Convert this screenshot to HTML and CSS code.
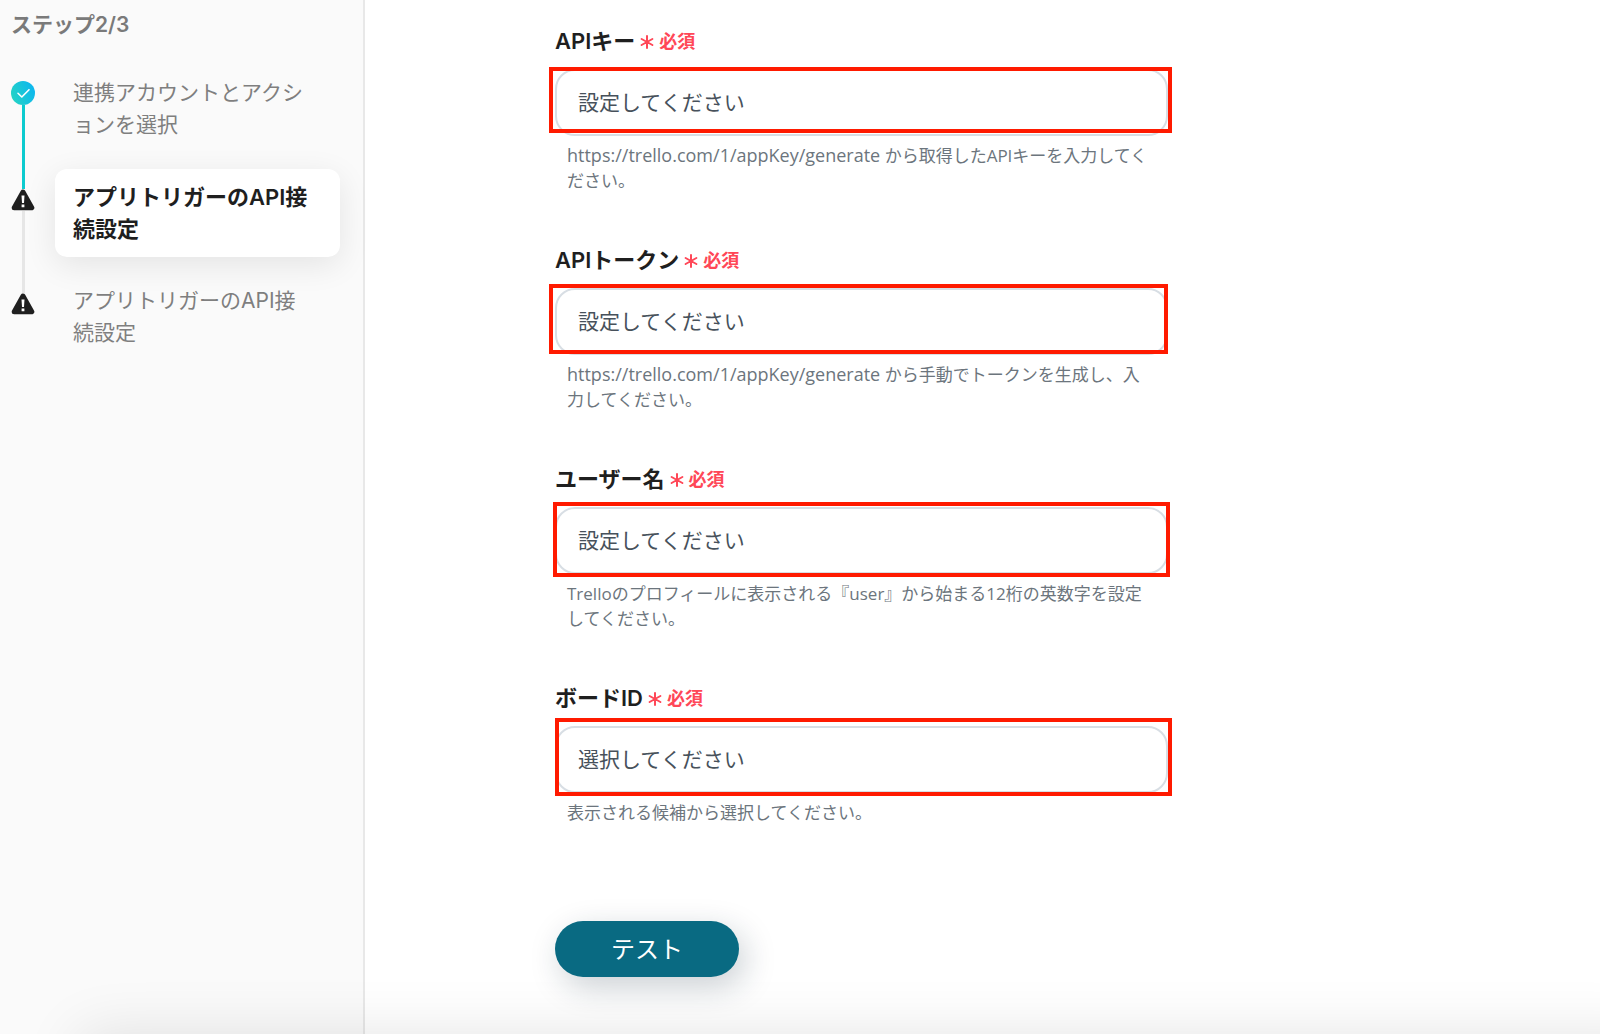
FILE: index.html
```html
<!DOCTYPE html>
<html lang="ja">
<head>
  <meta charset="UTF-8" />
  <meta name="viewport" content="width=device-width, initial-scale=1.0"/>
  <title>アプリトリガーのAPI接続設定</title>
  <link rel="stylesheet" href="styles.css">
</head>
<body>
  <svg class="defs" aria-hidden="true">
    <symbol id="required" viewBox="0 0 14 14">
      <path d="M7 1v12M1.6 4l10.8 6M12.4 4L1.6 10" fill="none" stroke="currentColor" stroke-width="2" stroke-linecap="round"/>
    </symbol>
    <symbol id="warning" viewBox="0 0 24 22">
      <path d="M12 3L20.800 18.800H3.200z" fill="#1f1f1f" stroke="#1f1f1f" stroke-width="5" stroke-linejoin="round"/>
      <path d="M10.500 6.500h3l-.5 7.500h-2zM10.600 15.500h2.800v2.800h-2.800z" fill="#fff"/>
    </symbol>
  </svg>

  <div class="layout">
    <aside class="sidebar">
      <h2 class="sidebar-title">ステップ2/3</h2>
      <ol class="steps">
        <li class="step">
          <div class="marker done">
            <svg width="24" height="24" viewBox="0 0 24 24">
              <defs>
                <linearGradient id="doneFill" x1="0" y1="0.7" x2="1" y2="0.3">
                  <stop offset="0" stop-color="#25d3c4"/>
                  <stop offset="1" stop-color="#0cb6f0"/>
                </linearGradient>
              </defs>
              <circle cx="12" cy="12" r="12" fill="url(#doneFill)"/>
              <path d="M7 12.300l3.800 3.700L18 8.700" fill="none" stroke="#fff" stroke-width="1.600" stroke-linecap="round" stroke-linejoin="round"/>
            </svg>
            <span class="line"></span>
          </div>
          <p class="step-name">連携アカウントとアクシ<br>ョンを選択</p>
        </li>
        <li class="step current">
          <div class="marker">
            <svg width="24" height="22"><use href="#warning"/></svg>
            <span class="line"></span>
          </div>
          <p class="step-name">アプリトリガーのAPI接<br>続設定</p>
        </li>
        <li class="step">
          <div class="marker">
            <svg width="24" height="22"><use href="#warning"/></svg>
          </div>
          <p class="step-name">アプリトリガーのAPI接<br>続設定</p>
        </li>
      </ol>
    </aside>

    <main class="content">
      <form class="form">
        <div class="field">
          <label for="apiKey">APIキー<span class="required"><svg width="14" height="14"><use href="#required"/></svg>必須</span></label>
          <div class="control mark-key">
            <input type="text" id="apiKey" placeholder="設定してください" />
          </div>
          <p class="help"><span class="url">https://trello.com/1/appKey/generate</span> から取得したAPIキーを入力してく<br>ださい。</p>
        </div>

        <div class="field">
          <label for="apiToken">APIトークン<span class="required"><svg width="14" height="14"><use href="#required"/></svg>必須</span></label>
          <div class="control mark-token">
            <input type="text" id="apiToken" placeholder="設定してください" />
          </div>
          <p class="help"><span class="url">https://trello.com/1/appKey/generate</span> から手動でトークンを生成し、入<br>力してください。</p>
        </div>

        <div class="field">
          <label for="userName">ユーザー名<span class="required"><svg width="14" height="14"><use href="#required"/></svg>必須</span></label>
          <div class="control mark-user">
            <input type="text" id="userName" placeholder="設定してください" />
          </div>
          <p class="help">Trelloのプロフィールに表示される『user』から始まる12桁の英数字を設定<br>してください。</p>
        </div>

        <div class="field">
          <label for="boardId">ボードID<span class="required"><svg width="14" height="14"><use href="#required"/></svg>必須</span></label>
          <div class="control mark-board">
            <select id="boardId">
              <option>選択してください</option>
            </select>
          </div>
          <p class="help">表示される候補から選択してください。</p>
        </div>

        <button type="button" class="test-button">テスト</button>
      </form>
    </main>
  </div>

  <div class="bottom-shade"></div>
</body>
</html>
```

FILE: styles.css
```css
* {
  box-sizing: border-box;
}
body {
  margin: 0;
  background: #fff;
  color: #1f1f1f;
  font-family: Inter, "Noto Sans CJK JP", sans-serif;
  font-size: 21px;
}
h2, p, ol {
  margin: 0;
  padding: 0;
}
.defs {
  display: none;
}
.layout {
  display: flex;
  min-height: 100vh;
}

/* sidebar */
.sidebar {
  flex: 0 0 365px;
  padding: 9px 23px 0 11px;
  background: #fafafa;
  border-right: 2px solid #e8e8e8;
}
.sidebar-title {
  margin-bottom: 24px;
  color: #7a7a7a;
  font-size: 21px;
  font-weight: 600;
  line-height: 32px;
}
.steps {
  display: flex;
  flex-direction: column;
  gap: 16px;
  list-style: none;
}
.step {
  display: flex;
  gap: 20px;
}
/* runs down into the next row so the line reaches the next icon */
.marker {
  display: flex;
  flex-direction: column;
  align-items: center;
  flex: 0 0 24px;
  margin: 20px 0 -36px;
}
.marker svg {
  flex: none;
}
.marker.done {
  margin-top: 16px;
}
.line {
  flex: 1;
  width: 3px;
  background: #e6e6e6;
}
.done .line {
  background: #0ccbcf;
}
.step-name {
  flex: 1;
  padding: 12px 0 12px 18px;
  border-radius: 12px;
  color: #7f7f7f;
  line-height: 32px;
  white-space: nowrap;
}
.current .step-name {
  background: #fff;
  box-shadow: 0 8px 32px rgba(0,0,0,0.09);
  color: #1f1f1f;
  font-size: 22px;
  font-weight: 600;
}

/* form */
.content {
  flex: 1;
  padding: 25px 24px 40px 190px;
}
.form {
  max-width: 613px;
}
.field {
  margin-bottom: 51px;
}
.field label {
  display: flex;
  align-items: center;
  gap: 5px;
  height: 32px;
  margin-bottom: 12px;
  font-size: 22px;
  font-weight: 600;
  line-height: 32px;
}
.required {
  display: flex;
  align-items: center;
  gap: 5px;
  padding-top: 2px;
  color: #ff4757;
  font-size: 18px;
}
.control {
  position: relative;
}
.control input,
.control select {
  display: block;
  width: 100%;
  height: 67px;
  padding: 0 21px;
  border: 2px solid #d8dee4;
  border-radius: 20px;
  background: #fff;
  color: #47515b;
  font-family: inherit;
  font-size: 21px;
  appearance: none;
}
.control input::placeholder {
  color: #47515b;
  opacity: 1;
}
/* red frames over the controls */
.control::after {
  content: "";
  position: absolute;
  border: 4px solid #ff1a00;
  pointer-events: none;
}
.mark-key::after {
  inset: -2px -4px 3px -6px;
}
.mark-token::after {
  inset: -4px 0 1px -6px;
}
.mark-user::after {
  inset: -5px -2px -3px -2px;
}
.mark-board::after {
  inset: -8px -4px -3px 0;
}
.help {
  padding: 7px 0 0 12px;
  color: #6c757d;
  font-family: "Open Sans", "Noto Sans CJK JP", sans-serif;
  font-size: 17px;
  line-height: 25px;
  white-space: nowrap;
}
.url {
  font-size: 18px;
  line-height: 1;
}
.test-button {
  width: 184px;
  height: 56px;
  margin-top: 45px;
  padding: 0 0 3px;
  border: none;
  border-radius: 28px;
  background: #096a82;
  box-shadow: 6px 10px 32px rgba(20,40,60,0.22);
  color: #fff;
  font-family: inherit;
  font-size: 24px;
  cursor: pointer;
}
.test-button:hover {
  background: #07586c;
}
.bottom-shade {
  position: fixed;
  top: 100%;
  left: 80px;
  right: -60px;
  height: 80px;
  box-shadow: 0 0 60px rgba(0,0,0,0.11);
}
```
